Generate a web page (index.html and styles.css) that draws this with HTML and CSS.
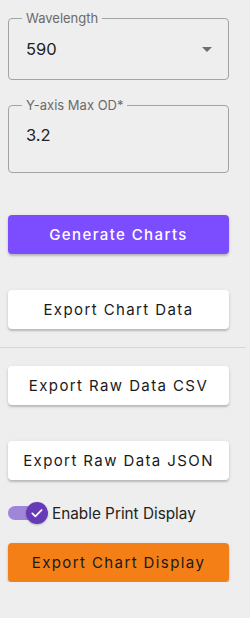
FILE: index.html
```html
<!DOCTYPE html>
<html lang="en">
<head>
  <meta charset="UTF-8">
  <meta name="viewport" content="width=device-width, initial-scale=1.0">
  <title>Chart Controls</title>
  <link rel="stylesheet" href="styles.css">
</head>
<body>
  <div class="panel">
    <!-- Wavelength select -->
    <fieldset class="field">
      <legend>Wavelength</legend>
      <div class="field-value select">
        <span>590</span>
        <span class="arrow"></span>
      </div>
    </fieldset>

    <!-- Y-axis input -->
    <fieldset class="field field-tall">
      <legend>Y-axis Max OD*</legend>
      <div class="field-value">3.2</div>
    </fieldset>

    <button class="btn btn-primary gap-lg">Generate Charts</button>
    <button class="btn gap-md">Export Chart Data</button>

    <hr class="divider">

    <button class="btn gap-sm">Export Raw Data CSV</button>
    <button class="btn gap-md">Export Raw Data JSON</button>

    <label class="toggle-row">
      <span class="toggle">
        <span class="toggle-track"></span>
        <span class="toggle-thumb">
          <svg viewBox="0 0 24 24" width="16" height="16">
            <path d="M5 12.5l4.5 4.5L19 7.5" fill="none" stroke="#fff" stroke-width="2.6" stroke-linecap="round" stroke-linejoin="round"/>
          </svg>
        </span>
      </span>
      <span class="toggle-label">Enable Print Display</span>
    </label>

    <button class="btn btn-orange gap-sm">Export Chart Display</button>
  </div>
</body>
</html>
```

FILE: styles.css
```css
body {
  margin: 0;
  background-color: #eeeeee;
  font-family: Inter, "Noto Sans", sans-serif;
  color: #1a1a1a;
}

.panel {
  display: flex;
  flex-direction: column;
  padding: 11px 21px 0 8px;
}

.field {
  margin: 0;
  padding: 12px 12px 18px 12px;
  border: 1px solid #a3a3a3;
  border-radius: 4px;
  min-width: 0;
}

.field legend {
  padding: 0 4px;
  margin-left: 1px;
  font-size: 13px;
  line-height: 14px;
  color: #6b6b6b;
}

.field-tall {
  margin-top: 18px;
  padding-top: 11px;
  padding-bottom: 25px;
}

.field-value {
  font-size: 16.5px;
  line-height: 24px;
  color: #222;
  padding-left: 5px;
}

.select {
  display: flex;
  justify-content: space-between;
  align-items: center;
}

.arrow {
  width: 0;
  height: 0;
  border-left: 5px solid transparent;
  border-right: 5px solid transparent;
  border-top: 5px solid #6e6e6e;
  margin-right: 4px;
}

.btn {
  height: 39px;
  border: none;
  border-radius: 4px;
  background: #fff;
  color: #1a1a1a;
  font-family: inherit;
  font-size: 15px;
  font-weight: 400;
  letter-spacing: 1.4px;
  box-shadow: 0 2px 2px rgba(0, 0, 0, 0.18), 0 1px 4px rgba(0, 0, 0, 0.08);
  cursor: pointer;
}

.btn-primary {
  background: #7c4dff;
  color: #fff;
  font-weight: 500;
}

.btn-orange {
  background: #f57f17;
}

.gap-lg { margin-top: 42px; }
.gap-md { margin-top: 36px; }
.gap-sm { margin-top: 18px; }

.divider {
  margin: 18px -17px 0 -8px;
  border: none;
  border-top: 1px solid #d7d7d7;
  height: 0;
}

.toggle-row {
  display: flex;
  align-items: center;
  height: 24px;
  margin-top: 21px;
}

.toggle {
  position: relative;
  width: 41px;
  height: 24px;
  flex-shrink: 0;
}

.toggle-track {
  position: absolute;
  left: 0;
  top: 5px;
  width: 34px;
  height: 14px;
  border-radius: 7px;
  background: #9f86d8;
}

.toggle-thumb {
  position: absolute;
  left: 18px;
  top: 1px;
  width: 22px;
  height: 22px;
  border-radius: 50%;
  background: #673ab7;
  display: flex;
  align-items: center;
  justify-content: center;
  box-shadow: 0 1px 2px rgba(0, 0, 0, 0.25);
}

.toggle-label {
  margin-left: 3px;
  font-size: 15.3px;
  color: #222;
}
```
